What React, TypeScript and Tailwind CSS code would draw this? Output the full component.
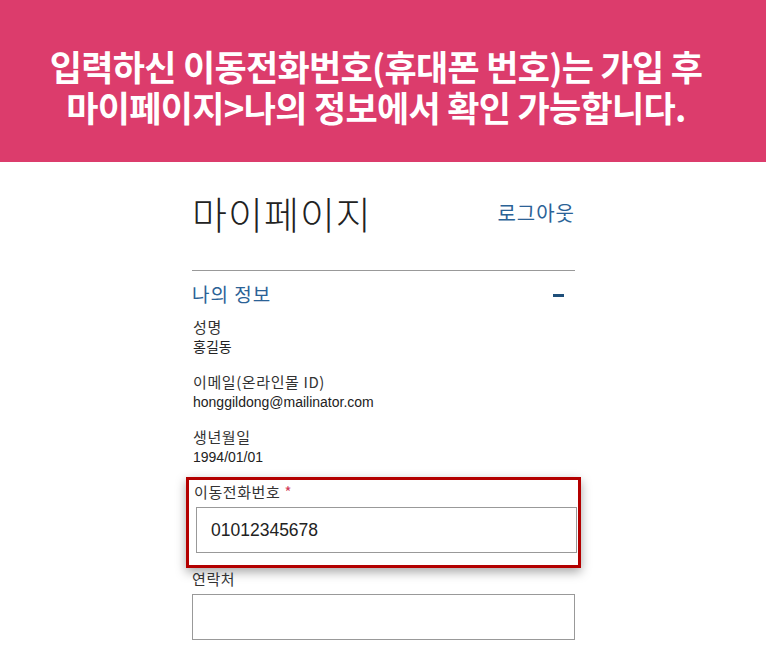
const KR = "font-['Noto_Sans_CJK_KR',sans-serif]";

function InfoRow({ label, value }: { label: string; value: string }) {
  return (
    <div className="mb-[15px]">
      <p className={`${KR} text-[15px] leading-[20px] tracking-[0.6px] text-[#333]`}>{label}</p>
      <p className="font-['Liberation_Sans','Noto_Sans_CJK_KR',sans-serif] text-[14px] leading-[20px] text-[#222]">{value}</p>
    </div>
  );
}

export default function App() {
  return (
    <div className="w-[766px] h-[656px] bg-white overflow-hidden">
      {/* Banner */}
      <div className="h-[162px] bg-[#dc3c6c] flex flex-col items-center justify-center pt-[10px] pr-[14px]">
        <p className={`${KR} text-white font-bold text-[35px] leading-[41px] tracking-[-0.7px] text-center`}>
          입력하신 이동전화번호(휴대폰 번호)는 가입 후
          <br />
          마이페이지&gt;나의 정보에서 확인 가능합니다.
        </p>
      </div>

      <div className="w-[383px] ml-[192px]">
        {/* Header */}
        <div className="flex justify-between pt-[26px] h-[109px] border-b border-[#999] items-start">
          <h1 className={`${KR} font-light text-[38px] leading-[50px] text-[#222] tracking-[1px]`}>마이페이지</h1>
          <a className={`${KR} text-[20px] leading-[50px] text-[#2b6296] tracking-[1px]`}>로그아웃</a>
        </div>

        {/* Section */}
        <div className="flex items-center justify-between h-[46px]">
          <span className={`${KR} text-[19px] text-[#2b6296] tracking-[1px]`}>나의 정보</span>
          <span className="w-[11px] h-[3px] bg-[#1f4f7a] mr-[11px] mt-[2px]" />
        </div>

        <div className="pl-[1px]">
          <InfoRow label="성명" value="홍길동" />
          <InfoRow label="이메일(온라인몰 ID)" value="honggildong@mailinator.com" />
          <InfoRow label="생년월일" value="1994/01/01" />
        </div>

        {/* Highlighted field */}
        <div className="-ml-[6px] -mr-[6px] border-[3px] border-[#b30000] shadow-[0_4px_10px_rgba(0,0,0,0.35)] pl-[7px] pr-[1px] pb-[12px] mt-[-5px]">
          <p className={`${KR} text-[15px] leading-[24px] tracking-[0.6px] text-[#333] -ml-[2px] mb-[3px]`}>
            이동전화번호 <span className="text-[#d23c5a]">*</span>
          </p>
          <div className="h-[46px] border border-[#999] flex items-center pl-[14px]">
            <span className="font-['Liberation_Sans',sans-serif] text-[17.5px] text-[#222]">01012345678</span>
          </div>
        </div>

        <p className={`${KR} text-[15px] leading-[20px] tracking-[0.6px] text-[#333] mt-[1px] mb-[5px]`}>연락처</p>
        <div className="h-[46px] border border-[#999]" />
      </div>
    </div>
  );
}
